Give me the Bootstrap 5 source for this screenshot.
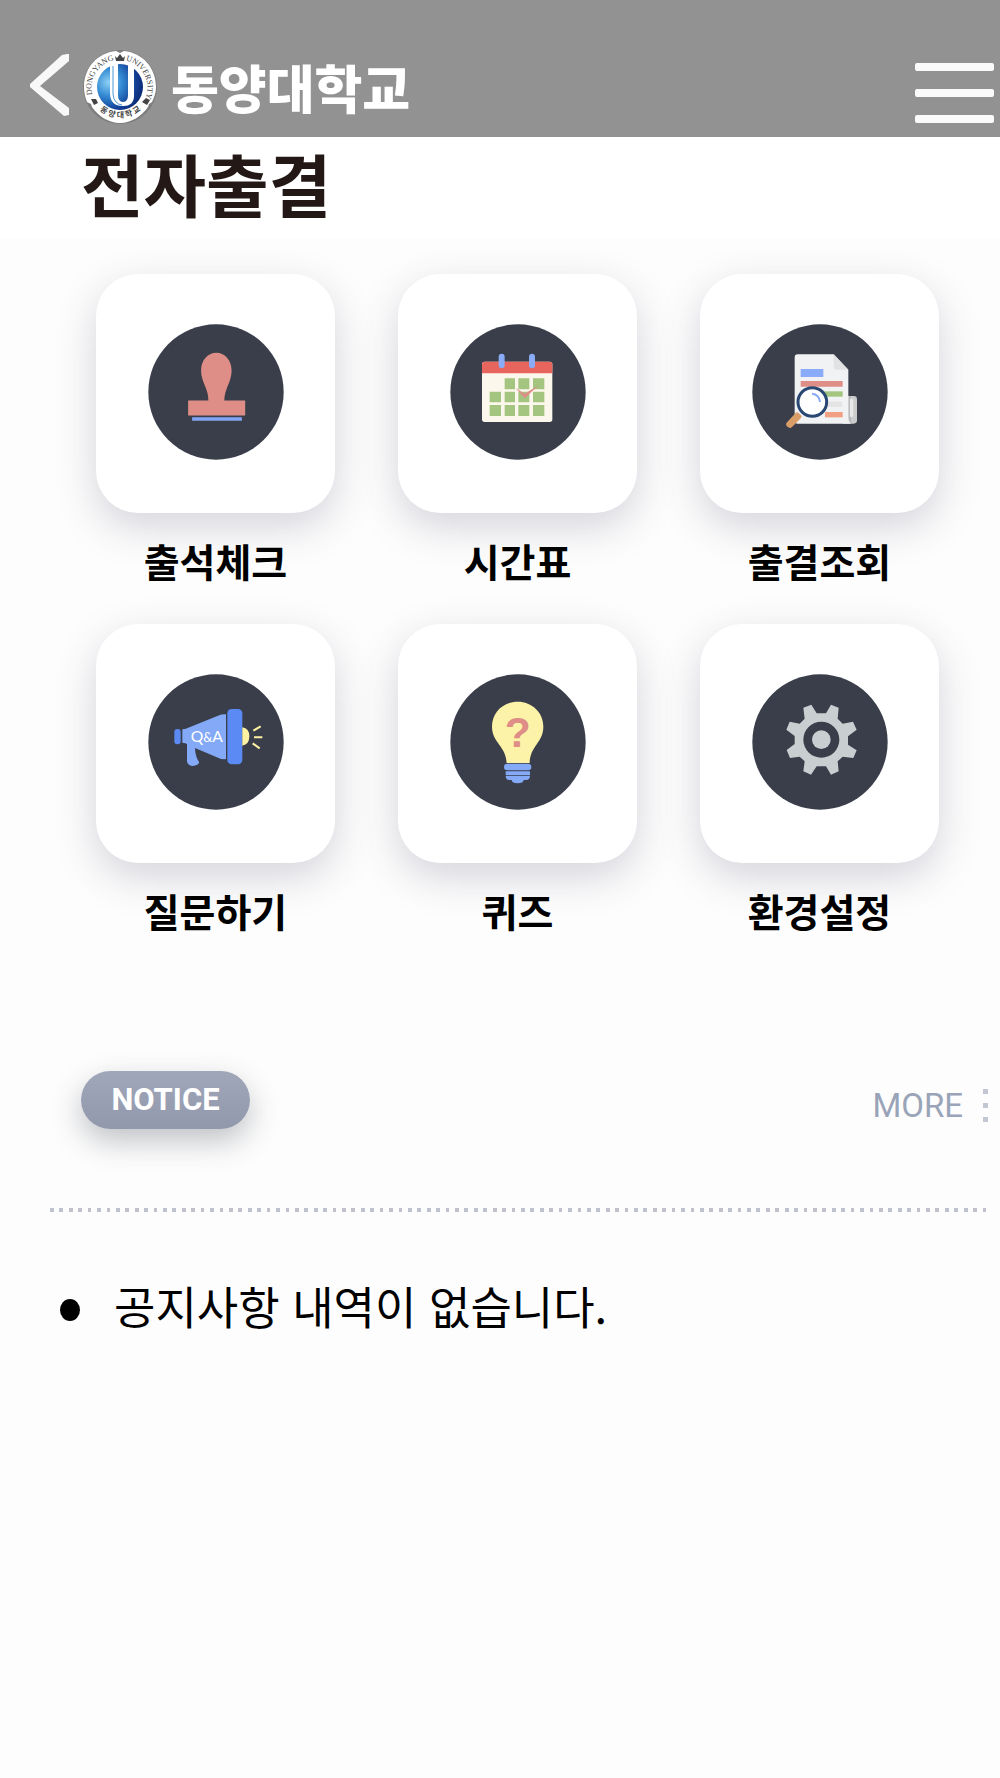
<!DOCTYPE html>
<html lang="ko">
<head>
<meta charset="utf-8">
<meta name="viewport" content="width=device-width, initial-scale=1">
<title>동양대학교 전자출결</title>
<link href="https://cdn.jsdelivr.net/npm/bootstrap@5.3.0/dist/css/bootstrap.min.css" rel="stylesheet">
<style>
body{background:#fdfdfd;color:#000;font-family:Roboto,"Noto Sans CJK KR",sans-serif}
.topbar{background:#929292;height:137px;padding:42px 6px 0 30px}
.topbar svg{display:block}
.brand-link{gap:13px;margin:5px 0 0 12px}
.brand-name{color:#fff;font:900 52px/80px "Noto Sans CJK KR",sans-serif}
.plain-btn{background:none;border:0;padding:0}
.back-btn{margin-top:12px}
.menu-btn{margin-top:21px}
.page-title{background:#fff;color:#231815;font:700 68px/92px "Noto Sans CJK KR",sans-serif;height:101px;padding:0 0 0 81px}
.menu-grid{display:grid;grid-template-columns:repeat(3,1fr);column-gap:63px;row-gap:32px;padding:36px 61px 0 96px}
.menu-item{color:#000;text-decoration:none;text-align:center}
.tile{background:#fff;border-radius:42px;aspect-ratio:1;box-shadow:0 14px 40px rgba(60,62,95,.21)}
.tile svg{width:136px;height:136px;margin-bottom:4px}
.menu-label{display:block;font:700 39px/60px "Noto Sans CJK KR",sans-serif;margin:17px 0 2px}
.notice-head{padding:129px 12px 0 81px}
.notice-pill{width:169px;height:58px;border-radius:29px;background:linear-gradient(#9fa7b9,#9298ac);color:#fff;font:700 31px/58px Roboto,sans-serif;text-align:center;margin:0;box-shadow:0 12px 30px rgba(50,55,70,.3)}
.more-link{color:#9aa4b8;font:400 33px/40px Roboto,sans-serif;text-decoration:none;margin-top:15px;gap:20px}
.dot-rule{height:4px;margin:79px 8px 0 50px;background:repeating-linear-gradient(to right,#bfc1cc 0 .4%,transparent .4% 1%)}
.notice-list{padding:60px 20px 0 60px;margin:0;font:400 45px/68px "Noto Sans CJK KR",sans-serif}
.notice-list li{gap:34px}
.bullet{width:20px;height:22px;border-radius:50%;background:#000;margin-top:8px}
</style>
</head>
<body>
<header class="topbar d-flex align-items-start">
  <button class="plain-btn back-btn" type="button" aria-label="뒤로">
    <svg width="40" height="63" viewBox="0 0 40 63"><path d="M37 0h2v7L10 32l29 22v7l-5 1L0 33v-3L32 1z" fill="#f8f8f8"/></svg>
  </button>
  <a href="#" class="brand-link d-flex align-items-center text-decoration-none">
    <svg width="76" height="76" viewBox="0 0 76 76" role="img" aria-label="DONGYANG UNIVERSITY">
      <defs>
        <radialGradient id="globe" cx=".25" cy=".4" r=".75"><stop offset="0" stop-color="#8ed0f5"/><stop offset=".4" stop-color="#338ad2"/><stop offset=".8" stop-color="#123f95"/><stop offset="1" stop-color="#0c2c78"/></radialGradient>
        <path id="arcTop" d="M14 54A28 28 0 1 1 61 54"/>
        <path id="arcBottom" d="M14 58A32 32 0 0 0 62 58"/>
      </defs>
      <circle cx="38" cy="38" r="37" fill="#666" opacity=".45"/>
      <path d="M34 2l4 2 4-2C61 4 74 19 74 38c0 6-2 11-4 15l-3 2-1 3c-6 9-17 16-28 16S16 67 10 58l-1-3-4-2C3 48 2 43 2 38 2 19 15 4 34 2z" fill="#fff"/>
      <circle cx="38" cy="38" r="23" fill="url(#globe)"/>
      <path d="M25 15l11-2v33q0 7 5 7t5-7V13h6v34q0 10-11 10-13 0-13-13V16z" fill="#fff"/>
      <path d="M31 17v28q1 10 9 11" fill="none" stroke="#4b98d8" stroke-width="1"/>
      <path d="M33 7l2 2 3-4 3 4 2-2-1 5h-8zM9 50l5 0 2 4-4 2zM60 53l4-4 4 2-3 5z" fill="#444"/>
      <g fill="#444" font-size="8" font-family="Liberation Serif,serif">
        <text><textPath href="#arcTop" startOffset="9">DONGYANG</textPath></text>
        <text><textPath href="#arcTop" startOffset="66">UNIVERSITY</textPath></text>
      </g>
      <text dx="0 2 2 2 2" fill="#444" font-size="8" font-weight="700" font-family="Noto Sans CJK KR,sans-serif"><textPath href="#arcBottom" startOffset="5">동양대학교</textPath></text>
    </svg>
    <span class="brand-name">동양대학교</span>
  </a>
  <button class="plain-btn menu-btn ms-auto" type="button" aria-label="메뉴">
    <svg width="79" height="61" viewBox="0 0 79 61" fill="#fafafa"><rect width="79" height="8" rx="2"/><rect y="26" width="79" height="8" rx="2"/><rect y="52" width="79" height="8" rx="2"/></svg>
  </button>
</header>
<main>
  <h1 class="page-title m-0">전자출결</h1>
  <nav class="menu-grid" aria-label="전자출결 메뉴">
    <a class="menu-item" href="#">
      <span class="tile d-flex align-items-center justify-content-center">
        <svg viewBox="205 207 410 410"><circle cx="410" cy="412" r="204" fill="#393e4a"/><path d="M326 438h61c1-36-22-55-22-91 0-29 19-53 46-53s46 24 46 53c0 36-22 55-22 91h63v45H326z" fill="#de8e86"/><path d="M338 488h150v11H338z" fill="#81a5f5"/></svg>
      </span>
      <span class="menu-label">출석체크</span>
    </a>
    <a class="menu-item" href="#">
      <span class="tile d-flex align-items-center justify-content-center">
        <svg viewBox="28 27 408 408"><circle cx="232" cy="231" r="203" fill="#393e4a"/><rect x="124" y="140" width="211" height="181" rx="8" fill="#fcf7ec"/><path d="M124 175v-26q0-9 9-9h193q9 0 9 9v26z" fill="#e8655e"/><g fill="#8aabf7"><rect x="174" y="116" width="18" height="44" rx="9"/><rect x="265" y="116" width="18" height="44" rx="9"/></g><path d="M192 190h31v33h-31zm41 0h33v33h-33zm44 0h34v33h-34zM147 230h34v32h-34zm45 0h31v32h-31zm41 0h33v32h-33zm44 0h34v32h-34zM147 270h34v33h-34zm45 0h31v33h-31zm41 0h33v33h-33zm44 0h34v33h-34z" fill="#a3c57f"/><path d="M225 219l27 17 43-26-43 40z" fill="#de8e86"/></svg>
      </span>
      <span class="menu-label">시간표</span>
    </a>
    <a class="menu-item" href="#">
      <span class="tile d-flex align-items-center justify-content-center">
        <svg viewBox="29 27 408 408"><circle cx="233" cy="231" r="203" fill="#393e4a"/><path d="M300 243h34q10 0 10 10v63q0 10-10 10h-34z" fill="#ccc"/><path d="M318 243h8v83h-8z" fill="#b9babd"/><path d="M323 252q6-4 10 2v49q-5 7-10 1z" fill="#e8e8e8"/><path d="M166 118h108l44 46v145q0 9 7 17H166q-9 0-9-9V127q0-9 9-9z" fill="#f1f2f3"/><path d="M274 118l44 46h-36q-8 0-8-8z" fill="#e1e2e3"/><path d="M175 162h68v24h-68z" fill="#8aabf7"/><path d="M175 198h126v17H175z" fill="#de8e86"/><path d="M240 229h61v16h-61z" fill="#a3c57f"/><path d="M250 260h49v16h-49z" fill="#e4e4e4"/><path d="M248 291h53v16h-53z" fill="#f2a084"/><path d="M160 294q4-4 8-1l8 8q4 4 0 8l-27 27q-5 5-11 1-9-4-6-13z" fill="#d99d67"/><circle cx="210" cy="261" r="43" fill="#fff" stroke="#294773" stroke-width="9"/><path d="M209 236q22 2 24 25" fill="none" stroke="#8aabf7" stroke-width="6"/></svg>
      </span>
      <span class="menu-label">출결조회</span>
    </a>
    <a class="menu-item" href="#">
      <span class="tile d-flex align-items-center justify-content-center">
        <svg viewBox="25 27 408 408"><circle cx="229" cy="231" r="203" fill="#393e4a"/><path d="M128 193q8 0 16-4l91-37q12-5 24-4v134q-12 2-24-4l-69-29q1 23 9 37 4 5 3 9-6 8-18 8-16-1-18-14v-52q-3-3-14-4z" fill="#84a9f6"/><rect x="104" y="192" width="19" height="46" rx="9" fill="#5b8af4"/><rect x="263" y="132" width="45" height="166" rx="13" fill="#5b8af4"/><path d="M308 187q21 3 21 27 0 25-21 28z" fill="#fdf2a1"/><path d="M341 197l22-13M343 217h25M339 235l21 15" stroke="#fdf2a1" stroke-width="6"/><text x="153" y="232" font-family="Lato,sans-serif" font-size="47" fill="#fff">Q<tspan font-size="38">&amp;</tspan>A</text></svg>
      </span>
      <span class="menu-label">질문하기</span>
    </a>
    <a class="menu-item" href="#">
      <span class="tile d-flex align-items-center justify-content-center">
        <svg viewBox="28 27 408 408"><circle cx="232" cy="231" r="203" fill="#393e4a"/><path d="M198 294c-2-52-44-61-44-109 0-43 34-75 77-75s77 32 77 75c0 48-40 57-41 109z" fill="#fdf3a8"/><rect x="190" y="296" width="82" height="20" rx="10" fill="#84a9f6"/><path d="M195 319h73v11h-73zm0 13h73q0 12-11 13h-8q-1 10-18 10t-18-10h-8q-10-1-10-13z" fill="#84a9f6"/><text x="231" y="246" text-anchor="middle" font-family="Liberation Sans,sans-serif" font-weight="700" font-size="128" fill="#de8e86">?</text></svg>
      </span>
      <span class="menu-label">퀴즈</span>
    </a>
    <a class="menu-item" href="#">
      <span class="tile d-flex align-items-center justify-content-center">
        <svg viewBox="29 27 408 408"><circle cx="233" cy="231" r="203" fill="#393e4a"/><g fill="#c9ced1"><path fill-rule="evenodd" d="M183 128l24-9 16 26h28l15-26 23 9-3 33 15 15 31-6 11 24-26 20v25l26 17-10 23-32-4-15 14 3 30-23 10-15-25h-28l-17 25-23-10 4-30-15-14-29 4-10-24 24-18v-24l-25-19 10-24 30 6 15-15zM237 170a54 54 0 1 0 0 108 54 54 0 0 0 0-108z"/><circle cx="237" cy="224" r="28"/></g></svg>
      </span>
      <span class="menu-label">환경설정</span>
    </a>
  </nav>
  <section aria-labelledby="notice-heading">
    <div class="notice-head d-flex justify-content-between align-items-start">
      <h2 class="notice-pill" id="notice-heading">NOTICE</h2>
      <a class="more-link d-flex align-items-center" href="#">MORE
        <svg width="5" height="34" viewBox="0 0 5 34" fill="#c2c7d3"><path d="M0 0h5v5H0zM0 14h5v5H0zM0 28h5v5H0z"/></svg>
      </a>
    </div>
    <div class="dot-rule"></div>
    <ul class="notice-list list-unstyled">
      <li class="d-flex align-items-center"><span class="bullet"></span>공지사항 내역이 없습니다.</li>
    </ul>
  </section>
</main>
<script src="https://cdn.jsdelivr.net/npm/bootstrap@5.3.0/dist/js/bootstrap.bundle.min.js"></script>
</body>
</html>
